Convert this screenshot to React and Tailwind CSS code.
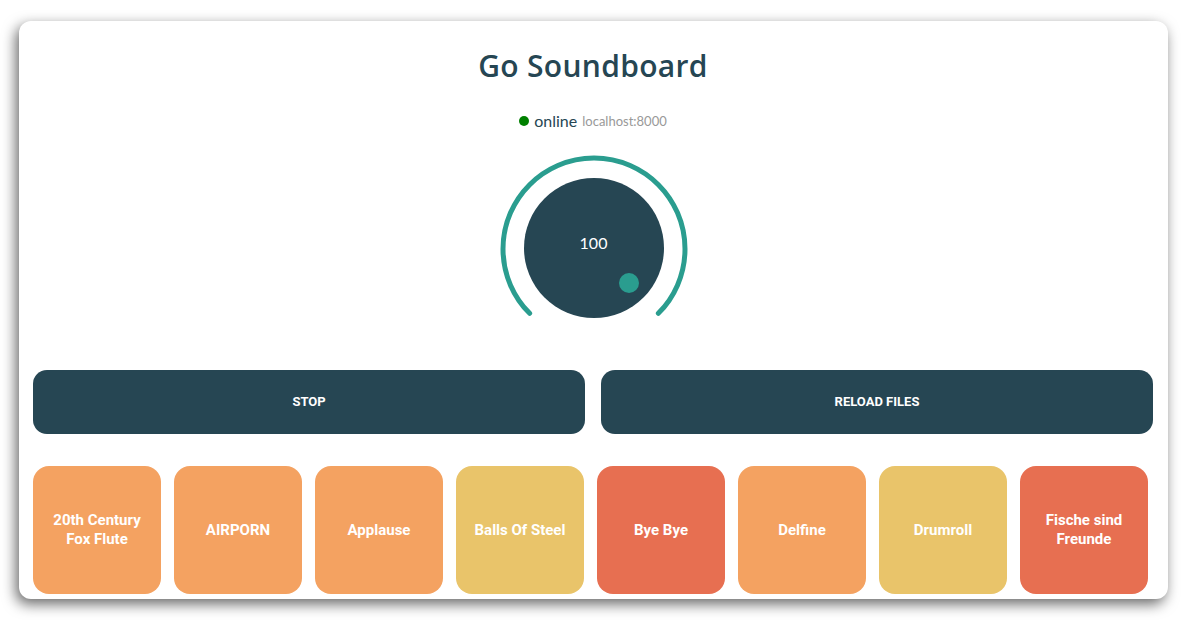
import React from "react";

const sounds = [
  { name: "20th Century Fox Flute", color: "bg-[#f4a261]" },
  { name: "AIRPORN", color: "bg-[#f4a261]" },
  { name: "Applause", color: "bg-[#f4a261]" },
  { name: "Balls Of Steel", color: "bg-[#e9c46a]" },
  { name: "Bye Bye", color: "bg-[#e76f51]" },
  { name: "Delfine", color: "bg-[#f4a261]" },
  { name: "Drumroll", color: "bg-[#e9c46a]" },
  { name: "Fische sind Freunde", color: "bg-[#e76f51]" },
];

// volume knob: 270° arc with a gap at the bottom
function Knob({ value }) {
  const cx = 96;
  const cy = 96;
  const r = 91;
  const start = (135 * Math.PI) / 180; // measured from top, clockwise
  const pt = (a) => [cx + r * Math.sin(a), cy - r * Math.cos(a)];
  const [x1, y1] = pt(Math.PI + Math.PI / 4);
  const [x2, y2] = pt(start);
  return (
    <div className="relative w-[192px] h-[180px]">
      <svg width="192" height="180" viewBox="0 0 192 180" className="absolute left-0 top-0">
        <path
          d={`M ${x1} ${y1} A ${r} ${r} 0 1 1 ${x2} ${y2}`}
          fill="none"
          stroke="#2a9d8f"
          strokeWidth="5"
          strokeLinecap="round"
        />
        <circle cx={cx} cy={cy - 1} r="70" fill="#264653" />
        <circle cx={cx + 35} cy={cy + 34} r="10" fill="#2a9d8f" />
      </svg>
      <div className="absolute left-0 right-0 top-[78px] text-center text-white text-[16px] font-['Lato',sans-serif]">
        {value}
      </div>
    </div>
  );
}

export default function App() {
  return (
    <div className="w-[1199px] h-[631px] bg-white pt-[21px] pl-[19px]">
      <div className="w-[1149px] h-[578px] bg-white rounded-[12px] overflow-hidden shadow-[-3px_5px_14px_rgba(0,0,0,0.6)] pl-[14px] pr-[15px]">
        <h1 className="text-center text-[#264653] text-[30px] font-semibold font-['Open_Sans',sans-serif] pt-[25px] leading-[40px] tracking-[0.3px]">
          Go Soundboard
        </h1>

        <div className="flex items-center justify-center gap-[5px] mt-[25px] font-['Lato',sans-serif]">
          <span className="w-[10px] h-[10px] rounded-full bg-[#008000]" />
          <span className="text-[16px] text-[#264653] leading-[20px]">online</span>
          <span className="text-[13px] text-[#999999] leading-[20px]">localhost:8000</span>
        </div>

        <div className="flex justify-center mt-[22px] pl-[1px]">
          <Knob value={100} />
        </div>

        <div className="flex gap-[16px] mt-[37px]">
          {["STOP", "RELOAD FILES"].map((label) => (
            <button
              key={label}
              className="flex-1 h-[64px] rounded-[14px] bg-[#264653] text-white text-[13px] font-bold font-['Roboto',sans-serif]"
            >
              {label}
            </button>
          ))}
        </div>

        <div className="flex flex-wrap gap-[13px] mt-[32px]">
          {sounds.map((s) => (
            <button
              key={s.name}
              className={`w-[128px] h-[128px] rounded-[16px] ${s.color} text-white text-[15px] leading-[19px] font-bold font-['Roboto',sans-serif] px-[12px] flex items-center justify-center text-center`}
            >
              {s.name}
            </button>
          ))}
        </div>
      </div>
    </div>
  );
}
